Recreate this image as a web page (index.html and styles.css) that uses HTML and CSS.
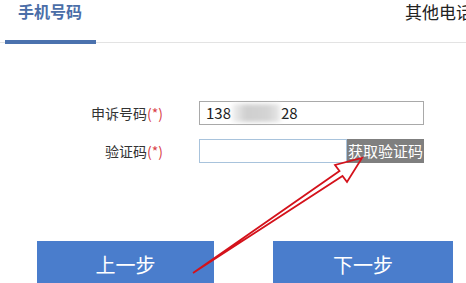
FILE: index.html
```html
<!DOCTYPE html>
<html lang="zh-CN">

<head>
    <meta charset="UTF-8">
    <meta name="viewport" content="width=device-width, initial-scale=1.0">
    <title>申诉</title>
    <link rel="stylesheet" href="styles.css">
</head>

<body>
    <div class="page">
        <div class="tabs">
            <div class="tab active">手机号码</div>
            <div class="tab other">其他电话</div>
        </div>

        <div class="form">
            <div class="row">
                <div class="label">申诉号码<span class="req">(*)</span></div>
                <div class="input phone">138<span class="mask"></span>28</div>
            </div>
            <div class="row">
                <div class="label">验证码<span class="req">(*)</span></div>
                <div class="input code"></div>
                <div class="getcode">获取验证码</div>
            </div>
        </div>

        <div class="btns">
            <div class="btn prev">上一步</div>
            <div class="btn next">下一步</div>
        </div>

        <!-- 红色箭头标注 -->
        <svg class="arrow" width="466" height="283" viewBox="0 0 466 283">
            <polygon points="193,273 342.5,176 347,182 362,158 335,165 339.5,171"
                fill="none" stroke="#d4121b" stroke-width="1.8" stroke-linejoin="miter" />
        </svg>
    </div>
</body>

</html>
```

FILE: styles.css
```css
body {
    margin: 0;
    background-color: #fff;
    font-family: "Noto Sans CJK SC", "Liberation Sans", sans-serif;
    color: #333;
}

.page {
    position: relative;
    width: 466px;
    height: 283px;
    overflow: hidden;
}

.tabs {
    display: flex;
    box-sizing: border-box;
    height: 43px;
    border-bottom: 1px solid #e3e3e3;
}

.tab {
    line-height: 20px;
}

.tab.active {
    box-sizing: border-box;
    flex-shrink: 0;
    width: 91px;
    height: 44px;
    margin-left: 5px;
    padding-left: 13px;
    padding-top: 1px;
    border-bottom: 4px solid #4b72ae;
    font-size: 16px;
    font-weight: bold;
    color: #4b6ea8;
}

.tab.other {
    flex-shrink: 0;
    margin-left: 309px;
    padding-top: 2px;
    font-size: 17px;
    color: #222;
    white-space: nowrap;
}

.form {
    margin-top: 58px;
    padding-bottom: 1px;
}

.row {
    display: flex;
    align-items: center;
    height: 24px;
    margin-bottom: 14px;
}

.row:last-child {
    margin-bottom: 0;
}

.label {
    width: 163px;
    text-align: right;
    font-size: 14px;
    color: #333;
}

.req {
    color: #d9434a;
}

.input {
    box-sizing: border-box;
    height: 24px;
    margin-left: 36px;
    padding-left: 6px;
    border: 1px solid #a9a9a9;
    font-size: 15px;
    line-height: 22px;
    color: #222;
}

.phone {
    display: flex;
    align-items: center;
    width: 225px;
}

.mask {
    display: inline-block;
    width: 48px;
    height: 18px;
    margin: 0 1px 0 1px;
    background: linear-gradient(90deg, #f2f2f2, #cfcfcf 30%, #d4d4d4 75%, #e8e8e8);
    filter: blur(2px);
}

.code {
    width: 148px;
    border-color: #a8c3dc;
}

.getcode {
    width: 77px;
    height: 24px;
    background-color: #7f7f7f;
    color: #fff;
    font-size: 15px;
    line-height: 24px;
    text-align: center;
    white-space: nowrap;
}

.btns {
    display: flex;
    margin-top: 77px;
}

.btn {
    height: 60px;
    line-height: 48px;
    background-color: #4a7dcc;
    color: #fff;
    font-size: 20px;
    text-align: center;
}

.prev {
    width: 177px;
    margin-left: 37px;
}

.next {
    width: 180px;
    margin-left: 59px;
}

.arrow {
    position: absolute;
    top: 0;
    left: 0;
}
```
